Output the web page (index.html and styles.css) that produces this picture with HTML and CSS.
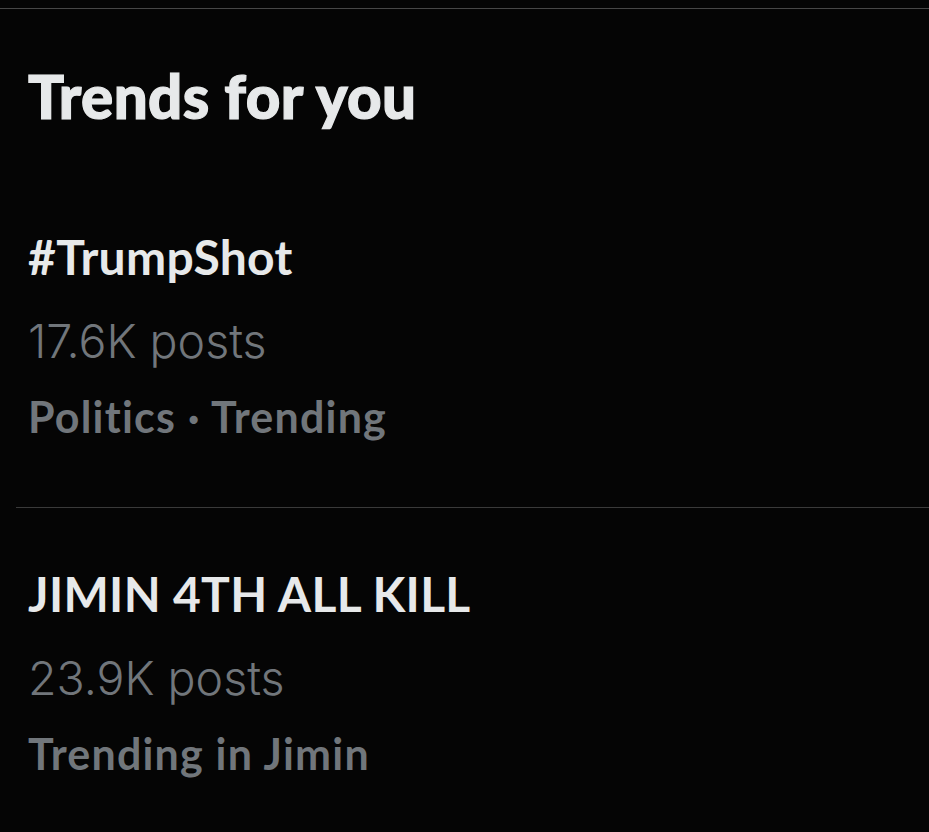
FILE: index.html
```html
<!DOCTYPE html>
<html lang="en">
<head>
<meta charset="utf-8">
<link rel="stylesheet" href="styles.css">
<title>Trends for you</title>
</head>
<body>
<div class="panel">
  <h2 class="title">Trends for you</h2>
  <div class="trend first">
    <div class="name">#TrumpShot</div>
    <div class="count">17.6K posts</div>
    <div class="meta">Politics · Trending</div>
  </div>
  <div class="trend second">
    <div class="name">JIMIN 4TH ALL KILL</div>
    <div class="count">23.9K posts</div>
    <div class="meta">Trending in Jimin</div>
  </div>
</div>
</body>
</html>
```
FILE: styles.css
```css
html, body {
  margin: 0;
  padding: 0;
  background: #050505;
  height: 100%;
}
.panel {
  margin-top: 8px;
  border-top: 1px solid #474747;
  padding-left: 28px;
  font-family: Lato, "Liberation Sans", sans-serif;
}
.title {
  margin: 0;
  padding-top: 52px;
  font-size: 60px;
  line-height: 70px;
  font-weight: 900;
  letter-spacing: 0.4px;
  color: #e7e9ea;
  -webkit-text-stroke: 1.2px #e7e9ea;
}
.trend .name {
  font-size: 48px;
  line-height: 80px;
  font-weight: 700;
  letter-spacing: 0.3px;
  color: #e7e9ea;
}
.trend .count {
  font-family: Inter, "Noto Sans", sans-serif;
  font-size: 46.5px;
  line-height: 88px;
  font-weight: 300;
  color: #71767b;
}
.trend .meta {
  font-size: 43px;
  line-height: 64px;
  font-weight: 700;
  letter-spacing: 1.2px;
  color: #71767b;
}
.first {
  padding-top: 86px;
  padding-bottom: 58px;
}
.second {
  margin-left: -12px;
  padding-left: 12px;
  padding-top: 46px;
  border-top: 1px solid #3a3a3a;
}
```
